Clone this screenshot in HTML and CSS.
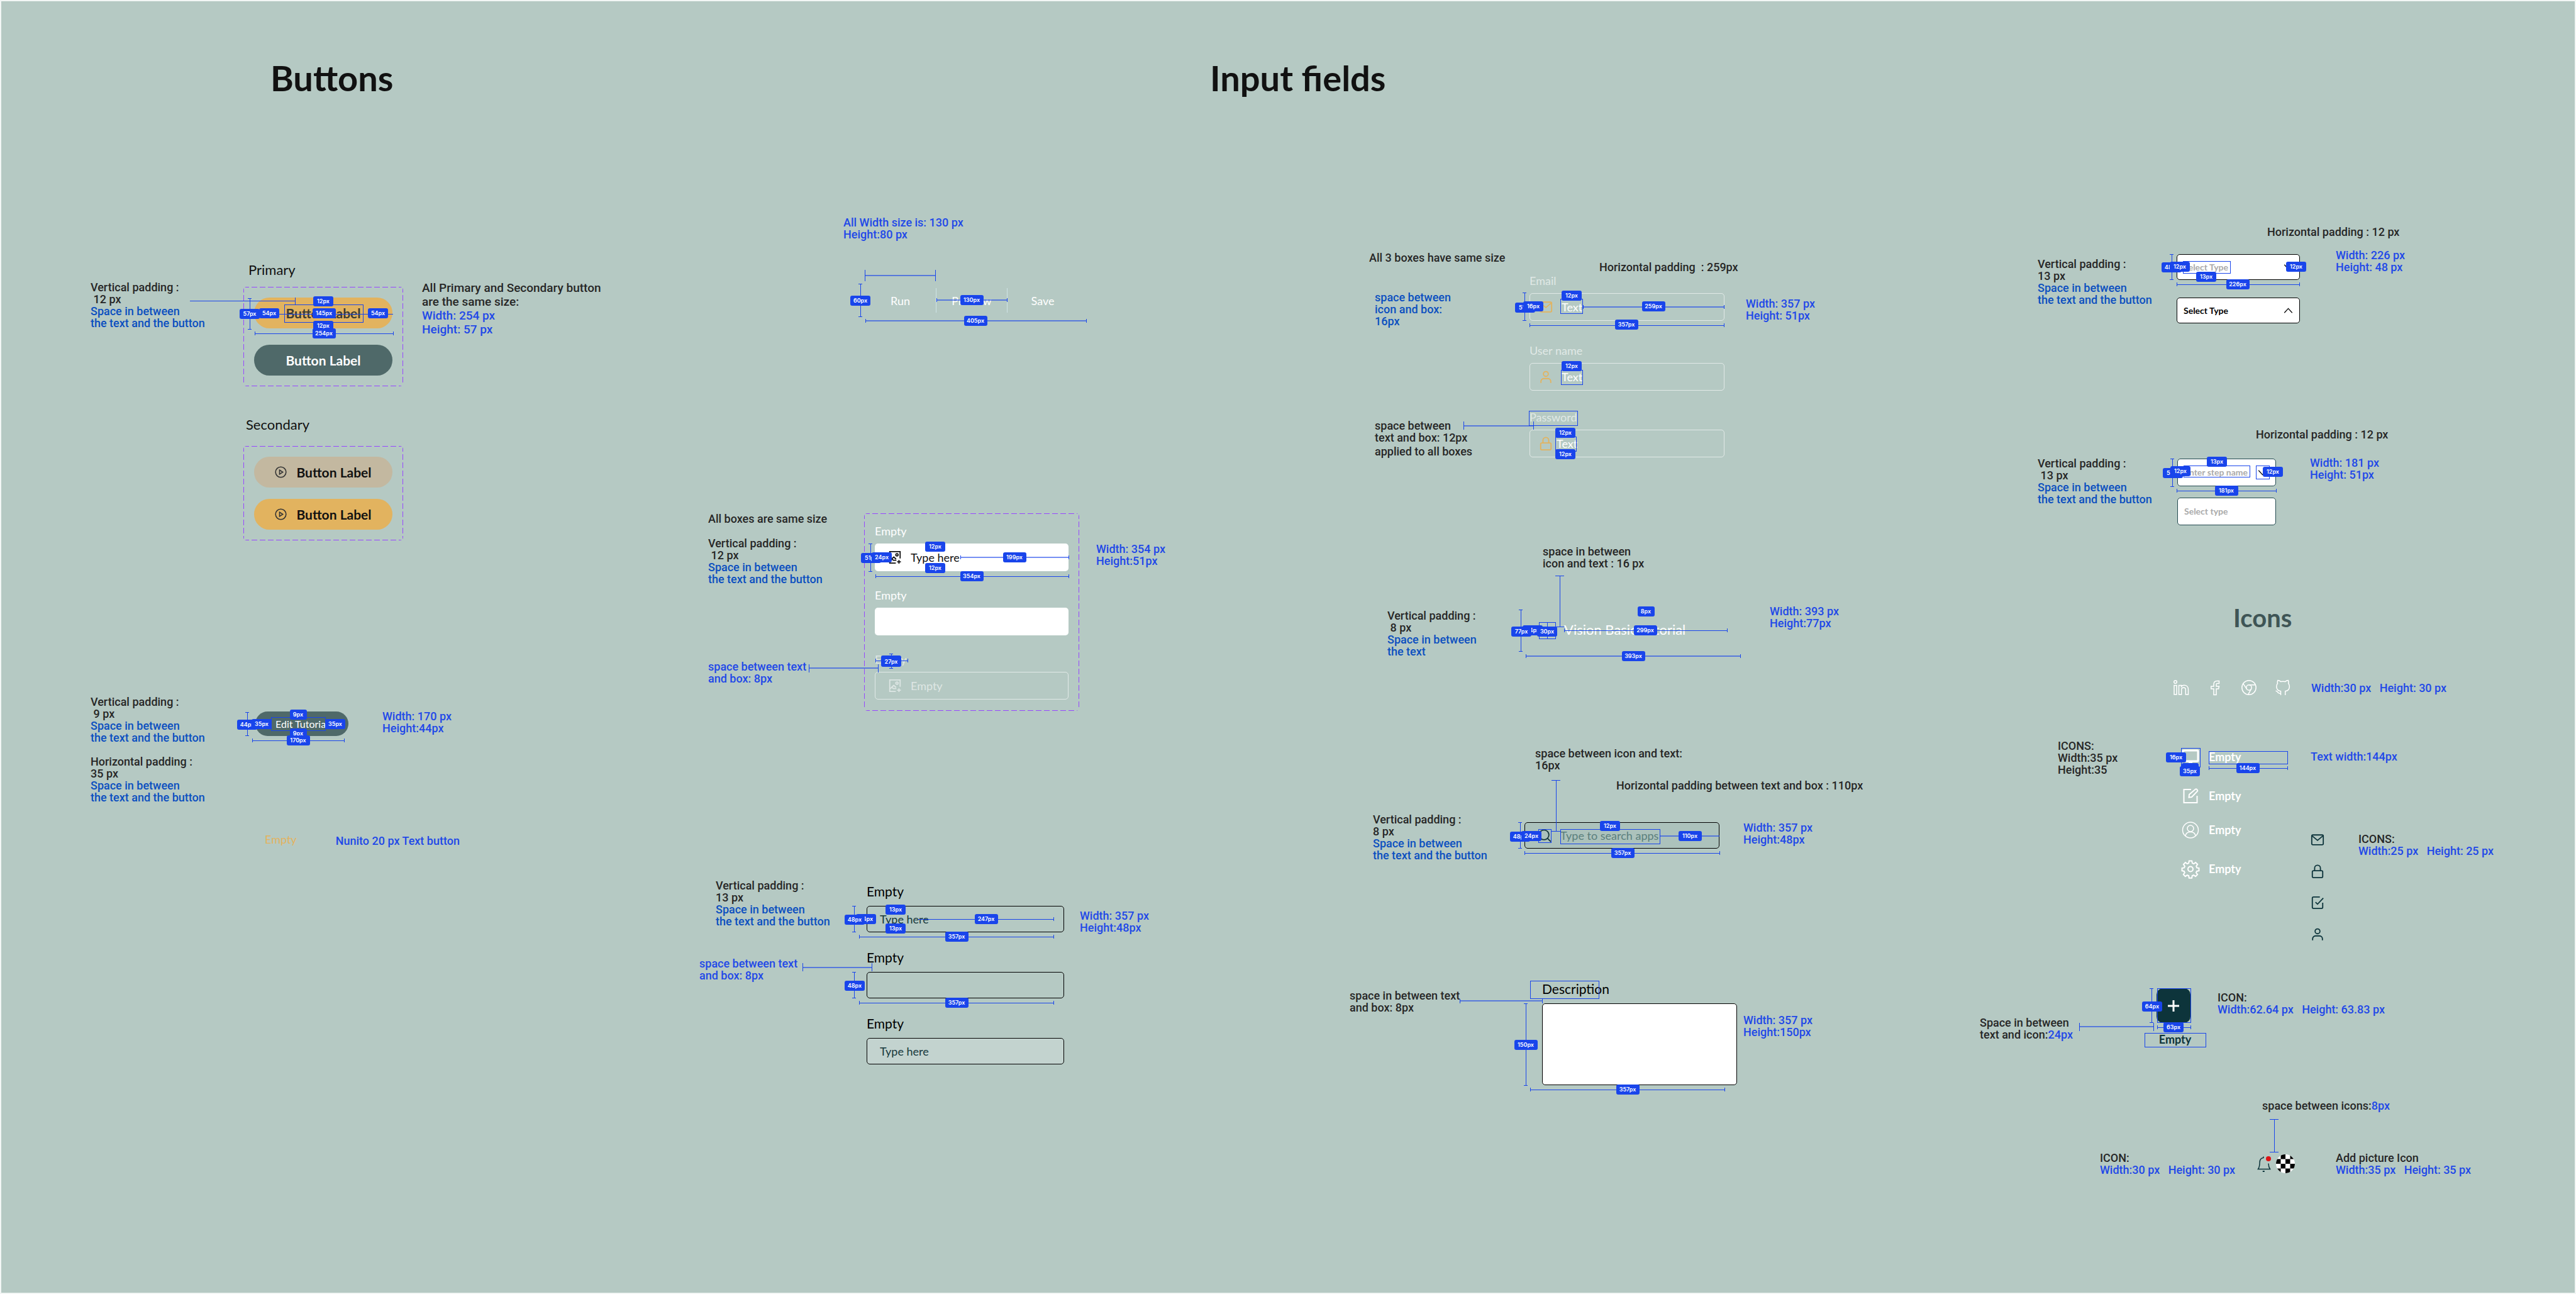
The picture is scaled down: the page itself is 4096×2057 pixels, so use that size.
FILE: index.html
```html
<!DOCTYPE html>
<html lang="en">
<head>
<meta charset="utf-8">
<title>Component specifications</title>
<link rel="stylesheet" href="styles.css">
</head>
<body>
<svg class="sprite" aria-hidden="true">
  <symbol id="play" viewBox="0 0 24 24"><circle cx="12" cy="12" r="10.5"/><path d="M9.5 7.8v8.4l6.5-4.2z"/></symbol>
  <symbol id="image-add" viewBox="0 0 24 24"><path d="M13.5 22H3V2h18v12M3 17.500l3.500-2.500 3 2h5M6 15l4-3.500 4 3.500"/><circle cx="15.500" cy="7.500" r="2"/><path d="M19 16.500v6.500M15.800 19.700h6.500"/></symbol>
  <symbol id="mail" viewBox="0 0 24 24"><rect x="2" y="3.500" width="20" height="17" rx="2"/><path d="M2.500 5l9.500 8 9.500-8"/></symbol>
  <symbol id="person" viewBox="0 0 24 24"><circle cx="12" cy="7" r="4.200"/><path d="M3.500 22.500v-2.500a5 5 0 0 1 5-5h7a5 5 0 0 1 5 5v2.500"/></symbol>
  <symbol id="lock" viewBox="0 0 24 24"><rect x="3" y="11" width="18" height="12" rx="2"/><path d="M7 11V6.500a5 5 0 0 1 10 0V11"/></symbol>
  <symbol id="check" viewBox="0 0 24 24"><path d="M21 12v8a2 2 0 0 1-2 2H5a2 2 0 0 1-2-2V4a2 2 0 0 1 2-2h11M8.500 11l3.500 3.500L22 4"/></symbol>
  <symbol id="search" viewBox="0 0 24 24"><circle cx="11" cy="11" r="8.500"/><path d="M17 17l6 6"/></symbol>
  <symbol id="down" viewBox="0 0 24 24"><path d="M2 6l10 11L22 6"/></symbol>
  <symbol id="up" viewBox="0 0 24 24"><path d="M2 18L12 7l10 11"/></symbol>
</svg>
<main class="board">
  <h2 class="title title-buttons">Buttons</h2>
  <h2 class="title title-inputs">Input fields</h2>

  <section class="column column-buttons">
    <h3 class="group primary-name">Primary</h3>
    <article class="spec buttons-spec">
      <p class="note">Vertical padding :<br>&nbsp;12 px<br><span class="deep">Space in between<br>the text and the button</span></p>
      <div class="frame frame-wide">
        <button class="btn amber ghosted">Button Label</button>
        <button class="btn slate">Button Label</button>
      </div>
      <p class="note roomy">All Primary and Secondary button<br>are the same size:<br><span class="blue">Width: 254 px<br>Height: 57 px</span></p>
      <svg class="redline" viewBox="144 448 812 168" width="812" height="168">
        <path d="M302 479H469M469 474V485M405 528v6M405 531H625M625 528v6M394 475h6M397 475V524M394 524h6M405 500H625M452 497v6M577 497v6"/>
        <rect x="452" y="485" width="125" height="28"/>
        <g class="tag d2" transform="translate(397 500)"><rect/><text>57px</text></g>
        <g class="tag d2" transform="translate(428 499)"><rect/><text>54px</text></g>
        <g class="tag d2" transform="translate(514 480)"><rect/><text>12px</text></g>
        <g class="tag d3" transform="translate(515 499)"><rect/><text>145px</text></g>
        <g class="tag d2" transform="translate(601 499)"><rect/><text>54px</text></g>
        <g class="tag d2" transform="translate(514 519)"><rect/><text>12px</text></g>
        <g class="tag d3" transform="translate(515 531)"><rect/><text>254px</text></g>
      </svg>
    </article>
    <h3 class="group secondary-name">Secondary</h3>
    <div class="frame frame-tight">
      <button class="btn sand"><svg class="icon i19"><use href="#play"/></svg>Button Label</button>
      <button class="btn amber"><svg class="icon i19"><use href="#play"/></svg>Button Label</button>
    </div>
    <article class="spec edit-spec">
      <p class="note">Vertical padding :<br>&nbsp;9 px<br><span class="deep">Space in between<br>the text and the button</span><br><br>Horizontal padding :<br>35 px<br><span class="deep">Space in between<br>the text and the button</span></p>
      <button class="btn-small">Edit Tutorial</button>
      <p class="note blue">Width: 170 px<br>Height:44px</p>
      <svg class="redline" viewBox="144 1107 700 171" width="700" height="171">
        <path d="M390 1133h6M393 1133V1170M390 1170h6M401 1175v6M401 1178H547M547 1175v6"/>
        <rect x="431" y="1141" width="86" height="21"/>
        <g class="tag d2" transform="translate(393 1153)"><rect/><text>44px</text></g>
        <g class="tag d2" transform="translate(416 1152)"><rect/><text>35px</text></g>
        <g class="tag d2" transform="translate(533 1152)"><rect/><text>35px</text></g>
        <g class="tag d1" transform="translate(474 1137)"><rect/><text>9px</text></g>
        <g class="tag d1" transform="translate(474 1167)"><rect/><text>9px</text></g>
        <g class="tag d3" transform="translate(474 1178)"><rect/><text>170px</text></g>
      </svg>
    </article>
    <div class="text-button-spec">
      <button class="btn-text">Empty</button>
      <p class="note blue">Nunito 20 px Text button</p>
    </div>
  </section>

  <section class="column column-fields">
    <article class="spec segment-spec">
      <p class="note blue">All Width size is: 130 px<br>Height:80 px</p>
      <div class="segments"><button>Run</button><button>Preview</button><button>Save</button></div>
      <svg class="redline" viewBox="1112 344 640 176" width="640" height="176">
        <path d="M1375 429V447M1487 429V447M1365 451h6M1368 451V503M1365 503h6M1489 474v6M1601 474v6M1376 507v6M1727 507v6"/>
        <path class="soft" d="M1375 438H1487M1489 477H1601M1376 510H1727"/>
        <g class="tag d2" transform="translate(1368 478)"><rect/><text>60px</text></g>
        <g class="tag d3" transform="translate(1545 477)"><rect/><text>130px</text></g>
        <g class="tag d3" transform="translate(1551 510)"><rect/><text>405px</text></g>
      </svg>
    </article>

    <article class="spec boxes-spec">
      <div class="notes">
        <p class="note">All boxes are same size</p>
        <p class="note">Vertical padding :<br>&nbsp;12 px<br><span class="deep">Space in between<br>the text and the button</span></p>
        <p class="note blue">space between text<br>and box: 8px</p>
      </div>
      <div class="frame fields-frame">
        <div class="field light"><label for="f1">Empty</label><div class="control white"><svg class="icon i22"><use href="#image-add"/></svg><input id="f1" value="Type here"></div></div>
        <div class="field light"><label for="f2">Empty</label><div class="control white"><input id="f2"></div></div>
        <div class="field light faded"><label for="f3">Empty</label><div class="control outline"><svg class="icon i22"><use href="#image-add"/></svg><input id="f3" value="Empty"></div></div>
      </div>
      <p class="note blue">Width: 354 px<br>Height:51px</p>
      <svg class="redline" viewBox="1112 815 760 316" width="760" height="316">
        <path d="M1381 864h6M1384 864V908M1381 908h6M1527 883v6M1699 883v6M1392 913v6M1392 916H1699M1699 913v6M1414 1039h6M1417 1039V1062M1414 1062h6M1392 1047v6M1392 1050H1443M1443 1047v6M1286 1056V1069M1396 1056V1069"/>
        <path class="soft" d="M1527 886H1699M1286 1062H1396"/>
        <g class="tag d2" transform="translate(1385 887)"><rect/><text>51px</text></g>
        <g class="tag d2" transform="translate(1402 886)"><rect/><text>24px</text></g>
        <g class="tag d2" transform="translate(1487 869)"><rect/><text>12px</text></g>
        <g class="tag d2" transform="translate(1487 903)"><rect/><text>12px</text></g>
        <g class="tag d3" transform="translate(1613 886)"><rect/><text>199px</text></g>
        <g class="tag d3" transform="translate(1545 916)"><rect/><text>354px</text></g>
        <g class="tag d2" transform="translate(1417 1050)"><rect/></g>
        <g class="tag d2" transform="translate(1417 1052)"><rect/><text>27px</text></g>
      </svg>
    </article>

    <article class="spec typed-spec">
      <div class="notes">
        <p class="note">Vertical padding :<br>13 px<br><span class="deep">Space in between<br>the text and the button</span></p>
        <p class="note blue">space between text<br>and box: 8px</p>
      </div>
      <div class="stack">
        <div class="field dark"><label for="g1">Empty</label><div class="control ink"><input id="g1" value="Type here"></div></div>
        <div class="field dark"><label for="g2">Empty</label><div class="control ink"><input id="g2"></div></div>
        <div class="field dark"><label for="g3">Empty</label><div class="control ink filled"><input id="g3" value="Type here"></div></div>
      </div>
      <p class="note blue">Width: 357 px<br>Height:48px</p>
      <svg class="redline" viewBox="1112 1400 760 300" width="760" height="300">
        <path d="M1355 1442h6M1358 1442V1483M1355 1483h6M1366 1488v6M1366 1491H1675M1675 1488v6M1460 1463H1675M1675 1460v6M1355 1547h6M1358 1547V1588M1355 1588h6M1366 1593v6M1366 1596H1675M1675 1593v6M1276 1533V1546M1386 1533V1546"/>
        <path class="soft" d="M1276 1540H1386"/>
        <g class="tag d2" transform="translate(1377 1463)"><rect/><text>24px</text></g>
        <g class="tag d2" transform="translate(1359 1464)"><rect/><text>48px</text></g>
        <g class="tag d2" transform="translate(1424 1448)"><rect/><text>13px</text></g>
        <g class="tag d2" transform="translate(1424 1478)"><rect/><text>13px</text></g>
        <g class="tag d3" transform="translate(1568 1463)"><rect/><text>247px</text></g>
        <g class="tag d3" transform="translate(1521 1491)"><rect/><text>357px</text></g>
        <g class="tag d2" transform="translate(1359 1569)"><rect/><text>48px</text></g>
        <g class="tag d3" transform="translate(1521 1596)"><rect/><text>357px</text></g>
      </svg>
    </article>
  </section>

  <section class="column column-forms">
    <article class="spec login-spec">
      <div class="notes">
        <p class="note">All 3 boxes have same size</p>
        <p class="note deep">space between<br>icon and box:<br>16px</p>
        <p class="note">space between<br>text and box: 12px<br><span class="lower">applied to all boxes</span></p>
      </div>
      <div class="stack">
        <p class="note">Horizontal padding&nbsp; : 259px</p>
        <div class="field pale"><label for="h1">Email</label><div class="control outline"><svg class="icon i22 gold"><use href="#mail"/></svg><input id="h1" value="Text"></div></div>
        <div class="field pale"><label for="h2">User name</label><div class="control outline"><svg class="icon i22 gold"><use href="#person"/></svg><input id="h2" value="Text"></div></div>
        <div class="field pale"><label for="h3">Password</label><div class="control outline snug"><svg class="icon i22 gold"><use href="#lock"/></svg><input id="h3" value="Text"></div></div>
      </div>
      <p class="note blue">Width: 357 px<br>Height: 51px</p>
      <svg class="redline" viewBox="2144 400 820 332" width="820" height="332">
        <path d="M2421 465h6M2424 465V509M2421 509h6M2517 485v6M2741 485v6M2432 514v6M2432 517H2741M2741 514v6M2327 670V683M2438 670V683"/>
        <path class="soft" d="M2517 488H2741M2327 677H2438"/>
        <rect x="2481" y="475" width="35" height="23"/>
        <rect x="2482" y="588" width="34" height="23"/>
        <rect x="2431" y="653" width="77" height="23"/>
        <rect x="2473" y="694" width="33" height="23"/>
        <g class="tag d2" transform="translate(2425 489)"><rect/><text>51px</text></g>
        <g class="tag d2" transform="translate(2438 487)"><rect/><text>16px</text></g>
        <g class="tag d2" transform="translate(2499 470)"><rect/><text>12px</text></g>
        <g class="tag d3" transform="translate(2629 487)"><rect/><text>259px</text></g>
        <g class="tag d3" transform="translate(2586 516)"><rect/><text>357px</text></g>
        <g class="tag d2" transform="translate(2499 582)"><rect/><text>12px</text></g>
        <g class="tag d2" transform="translate(2489 688)"><rect/><text>12px</text></g>
        <g class="tag d2" transform="translate(2489 722)"><rect/><text>12px</text></g>
      </svg>
    </article>

    <article class="spec vision-spec">
      <p class="note vision-top">space in between<br>icon and text : 16 px</p>
      <p class="note vision-left">Vertical padding :<br>&nbsp;8 px<br><span class="deep">Space in between<br>the text</span></p>
      <p class="vision">Vision Basic Tutorial</p>
      <p class="note blue">Width: 393 px<br>Height:77px</p>
      <svg class="redline" viewBox="2144 868 900 190" width="900" height="190">
        <path d="M2473 916h14M2480 916V997M2473 997h14M2415 970h6M2418 970V1036M2415 1036h6M2426 1041v6M2767 1041v6M2487 1000v6M2487 1003H2746M2746 1000v6M2460 990V1016"/>
        <path class="soft" d="M2426 1044H2767"/>
        <rect x="2447" y="990" width="26" height="26"/>
        <g class="tag d2" transform="translate(2437 1003)"><rect/><text>24px</text></g>
        <g class="tag d2" transform="translate(2419 1005)"><rect/><text>77px</text></g>
        <g class="tag d2" transform="translate(2460 1005)"><rect/><text>30px</text></g>
        <g class="tag d1" transform="translate(2617 973)"><rect/><text>8px</text></g>
        <g class="tag d3" transform="translate(2616 1003)"><rect/><text>299px</text></g>
        <g class="tag d3" transform="translate(2597 1044)"><rect/><text>393px</text></g>
      </svg>
    </article>

    <article class="spec search-spec">
      <p class="note search-top">space between icon and text:<br>16px</p>
      <p class="note search-side">Horizontal padding between text and box : 110px</p>
      <p class="note search-left">Vertical padding :<br>8 px<br><span class="deep">Space in between<br>the text and the button</span></p>
      <div class="control ink search"><svg class="icon i22"><use href="#search"/></svg><input type="search" aria-label="Search apps" placeholder="Type to search apps"></div>
      <p class="note blue">Width: 357 px<br>Height:48px</p>
      <svg class="redline" viewBox="2144 1189 830 182" width="830" height="182">
        <path d="M2467 1241h14M2474 1241V1322M2467 1322h14M2414 1308h6M2417 1308V1349M2414 1349h6M2424 1354v6M2424 1357H2734M2734 1354v6"/>
        <path class="soft" d="M2639 1330H2734"/>
        <rect x="2446" y="1319" width="20" height="21"/>
        <rect x="2481" y="1319" width="158" height="23"/>
        <g class="tag d2" transform="translate(2417 1331)"><rect/><text>48px</text></g>
        <g class="tag d2" transform="translate(2435 1330)"><rect/><text>24px</text></g>
        <g class="tag d2" transform="translate(2560 1314)"><rect/><text>12px</text></g>
        <g class="tag d3" transform="translate(2687 1330)"><rect/><text>110px</text></g>
        <g class="tag d3" transform="translate(2580 1357)"><rect/><text>357px</text></g>
      </svg>
    </article>

    <article class="spec area-spec">
      <p class="note">space in between text<br>and box: 8px</p>
      <div class="field dark"><label for="desc">Description</label><textarea id="desc"></textarea></div>
      <p class="note blue">Width: 357 px<br>Height:150px</p>
      <svg class="redline" viewBox="2144 1561 720 182" width="720" height="182">
        <path d="M2321 1590V1597M2452 1590V1597M2423 1597h6M2426 1597V1727M2423 1727h6M2433 1731v6M2433 1734H2742M2742 1731v6"/>
        <path class="soft" d="M2321 1593H2452"/>
        <rect x="2433" y="1561" width="109" height="28"/>
        <g class="tag d3" transform="translate(2426 1663)"><rect/><text>150px</text></g>
        <g class="tag d3" transform="translate(2588 1734)"><rect/><text>357px</text></g>
      </svg>
    </article>
  </section>

  <section class="column column-icons">
    <p class="note select-top">Horizontal padding : 12 px</p>
    <article class="spec select-spec">
      <p class="note">Vertical padding :<br>13 px<br><span class="deep">Space in between<br>the text and the button</span></p>
      <div class="stack">
        <div class="picker muted"><select aria-label="Type"><option>Select Type</option></select><svg class="icon thin"><use href="#down"/></svg></div>
        <div class="picker"><select aria-label="Type, open"><option>Select Type</option></select><svg class="icon thin"><use href="#up"/></svg></div>
      </div>
      <p class="note blue">Width: 226 px<br>Height: 48 px</p>
      <svg class="redline" viewBox="3148 396 700 120" width="700" height="120">
        <path d="M3450 404h6M3453 404V444M3450 444h6M3461 449v6M3461 452H3656M3656 449v6"/>
        <rect x="3471" y="415" width="75" height="19"/>
        <g class="tag d2" transform="translate(3453 425)"><rect/><text>48px</text></g>
        <g class="tag d2" transform="translate(3466 424)"><rect/><text>12px</text></g>
        <g class="tag d2" transform="translate(3508 440)"><rect/><text>13px</text></g>
        <g class="tag d3" transform="translate(3558 452)"><rect/><text>226px</text></g>
        <g class="tag d2" transform="translate(3651 424)"><rect/><text>12px</text></g>
      </svg>
    </article>
    <p class="note step-top">Horizontal padding : 12 px</p>
    <article class="spec step-spec">
      <p class="note">Vertical padding :<br>&nbsp;13 px<br><span class="deep">Space in between<br>the text and the button</span></p>
      <div class="stack">
        <div class="picker teal"><input aria-label="Step name" placeholder="Enter step name"><svg class="icon thin"><use href="#down"/></svg></div>
        <div class="picker teal"><input aria-label="Step type" placeholder="Select type"></div>
      </div>
      <p class="note blue">Width: 181 px<br>Height: 51px</p>
      <svg class="redline" viewBox="3148 727 700 108" width="700" height="108">
        <path d="M3451 730h6M3454 730V774M3451 774h6M3461 778v6M3461 781H3619M3619 778v6"/>
        <rect x="3472" y="741" width="105" height="18"/>
        <rect x="3587" y="741" width="21" height="21"/>
        <g class="tag d2" transform="translate(3455 753)"><rect/><text>51px</text></g>
        <g class="tag d2" transform="translate(3467 750)"><rect/><text>12px</text></g>
        <g class="tag d2" transform="translate(3525 735)"><rect/><text>13px</text></g>
        <g class="tag d2" transform="translate(3614 751)"><rect/><text>12px</text></g>
        <g class="tag d3" transform="translate(3540 781)"><rect/><text>181px</text></g>
      </svg>
    </article>

    <h2 class="icons-title">Icons</h2>
    <div class="social-spec">
      <svg class="icon i26" viewBox="0 0 26 26"><circle cx="4" cy="4" r="2.300"/><path d="M2 9.500h4v14.500H2zM9.500 9.500h4v1.800c1-1.300 2.500-2.100 4.300-2.100 4 0 6.700 2.600 6.700 6.600V24h-4.200v-7.500c0-2-1.300-3.400-3.200-3.400s-3.400 1.400-3.400 3.400V24H9.500z"/></svg>
      <svg class="icon i26" viewBox="0 0 26 26"><path d="M19.500 2.500h-3.200c-3.200 0-5.300 2-5.300 5.300V11H6.800v4H11v9.500h4V15h3.600l.9-4H15V8.200c0-1 .6-1.600 1.600-1.600h2.900z"/></svg>
      <svg class="icon i26" viewBox="0 0 26 26"><circle cx="13" cy="13" r="11.200"/><circle cx="13" cy="13" r="4.200"/><path d="M13 8.800h10.300M9.400 15.100L3.800 6.900M16.600 15.100l-5 9"/></svg>
      <svg class="icon i26" viewBox="0 0 26 26"><path d="M9.500 25v-6.200c-5-.8-6.700-3.800-6.700-7.600 0-1.900.6-3.400 1.700-4.600-.5-1.600-.4-3.300.3-5 1.800.1 3.400.8 4.900 2a16 16 0 0 1 6.800 0c1.500-1.200 3.100-1.900 4.900-2 .7 1.700.8 3.400.3 5 1.100 1.200 1.700 2.700 1.700 4.600 0 3.800-1.700 6.800-6.700 7.600V25M9.500 22c-3.500.8-4.500-.8-5.200-2.200C3.800 18.900 3 18.500 1.500 18.300"/></svg>
      <p class="note blue">Width:30 px&nbsp;&nbsp; Height: 30 px</p>
    </div>
    <article class="spec menu-spec">
      <p class="note">ICONS:<br>Width:35 px<br>Height:35</p>
      <ul class="menu">
        <li><svg class="icon i30" viewBox="0 0 30 30"><rect class="bold" x="3" y="5" width="24" height="17" rx="1"/><path class="solid" d="M12 22h6v3h3v2H9v-2h3z"/></svg>Empty</li>
        <li><svg class="icon i30" viewBox="0 0 30 30"><path class="mid" d="M16 5H4.500v21h21V15M12.500 17.500l.5-4.500 10-8.500c1.500-1 4 1.500 3 3.200L17 17z"/></svg>Empty</li>
        <li><svg class="icon i30" viewBox="0 0 30 30"><circle cx="15" cy="15.500" r="12.500"/><circle cx="15" cy="13" r="5"/><path d="M7 25c.5-4 3.500-6.500 8-6.500s7.500 2.500 8 6.500"/></svg>Empty</li>
        <li><svg class="icon i30" viewBox="0 0 30 30"><circle class="mid" cx="15" cy="15.500" r="4"/><path class="mid" d="M12.800 2.500h4.400l.7 3.600 2.300 1 3-2.100 3 3-2 3 .9 2.400 3.400.6v4.200l-3.500.7-1 2.300 2.100 3-3 3-3-2-2.300.9-.7 3.600h-4.300l-.7-3.600-2.300-.9-3 2-3-3 2-3-.9-2.300-3.400-.7V14l3.500-.6 1-2.400-2.100-3 3-3 3 2.100 2.300-1z"/></svg>Empty</li>
      </ul>
      <div class="menu-side">
        <p class="note blue">Text width:144px</p>
        <div class="small-icons">
          <div class="small-list">
            <svg class="icon i22"><use href="#mail"/></svg>
            <svg class="icon i22"><use href="#lock"/></svg>
            <svg class="icon i22"><use href="#check"/></svg>
            <svg class="icon i22"><use href="#person"/></svg>
          </div>
          <p class="note">ICONS:<br><span class="blue">Width:25 px&nbsp;&nbsp; Height: 25 px</span></p>
        </div>
      </div>
      <svg class="redline" viewBox="3148 1178 600 80" width="600" height="80">
        <path d="M3512 1220v6M3512 1223H3637M3637 1220v6"/>
        <rect x="3468" y="1191" width="30" height="30"/>
        <rect x="3512" y="1196" width="125" height="20"/>
        <g class="tag d2" transform="translate(3460 1206)"><rect/><text>16px</text></g>
        <g class="tag d1" transform="translate(3482 1223)"><rect/></g>
        <g class="tag d2" transform="translate(3482 1228)"><rect/><text>35px</text></g>
        <g class="tag d3" transform="translate(3574 1223)"><rect/><text>144px</text></g>
      </svg>
    </article>

    <article class="spec plus-spec">
      <p class="note">Space in between<br>text and icon:<span class="blue">24px</span></p>
      <div class="plus">
        <button aria-label="Add"><svg class="icon i22" viewBox="0 0 22 22"><path class="bold" d="M11 2v18M2 11h18"/></svg></button>
        <p>Empty</p>
      </div>
      <p class="note">ICON:<br><span class="blue">Width:62.64 px&nbsp;&nbsp; Height: 63.83 px</span></p>
      <svg class="redline" viewBox="3148 1573 800 94" width="800" height="94">
        <path d="M3418 1573h6M3421 1573V1627M3418 1627h6M3430 1632v6M3430 1635H3483M3483 1632v6M3306 1628V1641M3424 1628V1641"/>
        <path class="soft" d="M3306 1634H3424"/>
        <rect x="3430" y="1573" width="53" height="54"/>
        <rect x="3410" y="1644" width="97" height="22"/>
        <g class="tag d2" transform="translate(3422 1602)"><rect/><text>64px</text></g>
        <g class="tag d2" transform="translate(3456 1635)"><rect/><text>63px</text></g>
      </svg>
    </article>

    <article class="spec bell-spec">
      <p class="note bell-top">space between icons:<span class="blue">8px</span></p>
      <p class="note bell-left">ICON:<br><span class="blue">Width:30 px&nbsp;&nbsp; Height: 30 px</span></p>
      <div class="bell">
        <svg class="icon i26" viewBox="0 0 26 26"><path d="M13 3.500c-4 .3-6 3.500-6 8 0 4.500 0 6.500-2.500 10h19c-2-3-2.500-5-2.500-9M13 4V1.500"/><path class="mid" d="M11.800 25h3"/><circle class="alert" cx="21" cy="5" r="4"/></svg>
        <svg class="avatar" viewBox="0 0 32 32"><clipPath id="round"><circle cx="16" cy="16" r="16"/></clipPath><g clip-path="url(#round)"><rect width="32" height="32" fill="#fff"/><path d="M8 0h8v8H8zM24 0h8v8h-8zM0 8h8v8H0zM16 8h8v8h-8zM8 16h8v8H8zM24 16h8v8h-8zM0 24h8v8H0zM16 24h8v8h-8z"/></g></svg>
      </div>
      <p class="note">Add picture Icon<br><span class="blue">Width:35 px&nbsp;&nbsp; Height: 35 px</span></p>
      <svg class="redline" viewBox="3148 1750 820 120" width="820" height="120">
        <path d="M3609 1781h14M3616 1781V1833M3609 1833h14"/>
      </svg>
    </article>
  </section>
</main>
</body>
</html>
```
FILE: styles.css
```css
:root {
  --page: #b5c9c3;
  --text: #262626;
  --blue: #1f48e8;
  --deep: #0b4fc0;
  --tag: #1945eb;
  --amber: #e2b35f;
  --slate: #4f6969;
  --teal: #0d343b;
  --pale: rgba(255, 255, 255, .6);
}

* { box-sizing: border-box; }

body {
  margin: 0;
  background: var(--page);
  color: var(--text);
  font-family: Lato, "Noto Sans", sans-serif;
  font-size: 18px;
  line-height: 24px;
}

p, h2, h3, ul { margin: 0; padding: 0; font-weight: 400; }

button, input, select, textarea {
  margin: 0;
  padding: 0;
  border: 0;
  background: none;
  color: inherit;
  font: inherit;
  appearance: none;
}

input { display: block; flex: 1; min-width: 0; height: 24px; }

.sprite { position: absolute; width: 0; height: 0; }

.board {
  display: grid;
  grid-template-columns: 968fr 1032fr 1004fr 946fr;
  grid-template-rows: auto 1fr;
  min-height: 100vh;
  padding: 86px 0 0 142px;
  border: 2px solid #f2f6f5;
}

.title { color: #111; font-size: 56px; font-weight: 700; line-height: 72px; }
.title-buttons { grid-column: 1; padding-left: 286px; }
.title-inputs { grid-column: 2 / 5; padding-left: 812px; }

.column { grid-row: 2; min-width: 0; }

/* Shared text */
.note {
  font-family: Roboto, "Liberation Sans", sans-serif;
  font-size: 18px;
  font-weight: 500;
  line-height: 19px;
  white-space: nowrap;
}
.roomy { font-size: 19px; line-height: 22px; }
.blue { color: var(--blue); }
.deep { color: var(--deep); }
.group { color: #111; font-size: 22px; line-height: 26px; }

.spec { position: relative; display: grid; align-items: start; justify-content: start; }

/* Measurement overlay */
.redline {
  position: absolute;
  top: 0;
  left: 0;
  overflow: visible;
  fill: none;
  stroke: var(--tag);
  shape-rendering: crispEdges;
  pointer-events: none;
}
.redline .soft { stroke-width: 2; opacity: .6; }
.tag rect { y: -8px; height: 16px; rx: 3px; fill: var(--tag); stroke: none; shape-rendering: auto; }
.tag text {
  fill: #fff;
  stroke: none;
  font-family: Inter, sans-serif;
  font-size: 9px;
  font-weight: 600;
  text-anchor: middle;
  transform: translateY(3px);
}
.d1 rect { x: -13px; width: 27px; }
.d2 rect { x: -16px; width: 32px; }
.d3 rect { x: -18px; width: 37px; }

/* Icons */
.icon { display: block; flex: none; fill: none; stroke: currentColor; stroke-width: 2; overflow: visible; }
.thin { width: 15px; height: 15px; }
.i19 { width: 19px; height: 19px; }
.i22 { width: 22px; height: 22px; }
.i26 { width: 26px; height: 26px; stroke-width: 1.5; }
.i30 { width: 30px; height: 30px; stroke-width: 1.5; }
.icon .bold { stroke-width: 3; }
.icon .mid { stroke-width: 2; }
.icon .solid { fill: currentColor; stroke: none; }
.icon .alert { fill: #dd1416; stroke: none; }
.gold { color: var(--amber); }

/* Buttons */
.column-buttons { padding-top: 256px; }
.primary-name { padding-left: 251px; }
.secondary-name { margin-top: 48px; padding-left: 247px; }
.buttons-spec { grid-template-columns: 243px 254px auto; margin-top: 5px; }
.buttons-spec .frame { margin-top: 9px; }
.buttons-spec .roomy { padding-left: 30px; }

/* Dashed outline: 9px dashes, 4px gaps */
.frame {
  --across: repeating-linear-gradient(90deg, #9747ff 0 9px, transparent 9px 13px);
  --down: repeating-linear-gradient(180deg, #9747ff 0 9px, transparent 9px 13px);
  display: flex;
  flex-direction: column;
  padding: 17px;
  border-radius: 5px;
  background:
    var(--across) top / 100% 1px no-repeat,
    var(--across) bottom / 100% 1px no-repeat,
    var(--down) left / 1px 100% no-repeat,
    var(--down) right / 1px 100% no-repeat;
}
.frame-wide { gap: 26px; }
.frame-tight { gap: 18px; width: 254px; margin: 21px 0 0 243px; }
.btn {
  display: flex;
  align-items: center;
  justify-content: center;
  gap: 15px;
  height: 49px;
  border-radius: 25px;
  color: #111;
  font-size: 21px;
  font-weight: 700;
}
.btn .icon { color: #333; }
.amber { background: var(--amber); }
.ghosted { color: #3a3a34; }
.slate { background: var(--slate); color: #fff; }
.sand { background: #c3b8a0; }
.edit-spec { grid-template-columns: 262px 148px auto; margin-top: 247px; }
.edit-spec .blue { padding: 23px 0 0 54px; }
.btn-small { height: 39px; margin-top: 25px; border-radius: 20px; background: var(--slate); color: #fff; font-size: 16px; }
.text-button-spec { display: flex; align-items: end; gap: 62px; margin-top: 45px; padding-left: 277px; }
.btn-text { color: var(--amber); }

/* Fields */
.stack, .field { display: flex; flex-direction: column; }
.field { gap: 8px; }
.control {
  display: flex;
  align-items: center;
  height: 44px;
  padding: 0 20px;
  border: 1px solid transparent;
  border-radius: 5px;
}
.white { background: #fff; color: #111; }
.outline { border-color: var(--pale); }
.ink { border-color: #000; }
.light label { color: #fff; }

.column-fields { padding-top: 184px; }
.segment-spec .note { padding-left: 229px; }
.segments { display: flex; margin: 76px 0 0 263px; color: #fff; }
.segments button { width: 113px; height: 39px; }
.segments button + button { border-left: 1px solid #cfe4e6; }

.boxes-spec { grid-template-columns: 262px 342px auto; margin-top: 318px; }
.boxes-spec .notes { padding-left: 14px; }
.boxes-spec .notes .note + .note { margin-top: 20px; }
.boxes-spec .notes .blue.note { margin-top: 120px; }
.boxes-spec > .blue { padding: 48px 0 0 27px; }
.fields-frame { gap: 26px; margin-top: 1px; padding: 16px 17px 18px; }
.fields-frame .icon { margin-right: 14px; }
.faded label, .faded .icon, .faded input { color: #fff; opacity: .55; }

.typed-spec { grid-template-columns: 266px 314px auto; margin-top: 268px; }
.typed-spec .notes .note { padding-left: 26px; }
.typed-spec .notes .blue { margin-top: 48px; padding-left: 0; }
.typed-spec .stack { gap: 27px; margin-top: 6px; }
.typed-spec > .blue { padding: 48px 0 0 25px; }
.dark { gap: 10px; }
.dark label { color: #000; font-size: 21px; line-height: 26px; }
.dark .control { height: 42px; color: #16383c; }
.filled { background: rgba(255, 255, 255, .2); }

.column-forms { padding-top: 240px; }
.login-spec { grid-template-columns: 288px 310px auto; }
.login-spec .notes .note { padding-left: 42px; }
.login-spec .notes .note:first-child { padding-left: 33px; }
.login-spec .notes .note:nth-child(2) { margin-top: 44px; }
.login-spec .notes .note:nth-child(3) { margin-top: 147px; }
.lower { line-height: 25px; }
.login-spec .stack .note { margin-top: 15px; padding-left: 111px; }
.login-spec > .blue { padding: 73px 0 0 34px; }
.pale label { color: var(--pale); }
.pale .control { gap: 14px; padding: 0 14px; color: #fff; }
.pale .snug { gap: 6px; }
.pale + .pale { margin-top: 35px; }
.pale + .pale + .pale { margin-top: 30px; }

.vision-spec { grid-template-columns: 343px 327px auto; margin-top: 137px; }
.vision-top { grid-column: 1 / -1; padding: 0 0 57px 309px; }
.vision-left { padding: 7px 0 0 62px; }
.vision { padding-top: 25px; color: #fff; font-size: 22px; line-height: 28px; }

.search-spec { grid-template-columns: 280px 310px auto; margin-top: 143px; }
.search-top { grid-column: 1 / -1; padding-left: 297px; }
.search-side { grid-column: 1 / -1; padding: 13px 0 35px 426px; }
.search-left { padding-left: 39px; }
.search { gap: 14px; height: 42px; margin-top: 14px; background: rgba(80, 120, 110, .08); color: #16383c; }
.search input::placeholder { color: #5b7f7c; opacity: 1; }
.search-spec > .blue { padding: 13px 0 0 38px; }

.area-spec { grid-template-columns: 308px 310px auto; margin-top: 190px; }
.area-spec > .note { padding: 14px 0 0 2px; }
.area-spec > .blue { padding: 53px 0 0 10px; }
textarea { height: 130px; border: 1px solid #000; border-radius: 5px; background: #fff; resize: none; }

/* Selects and icons */
.column-icons { padding-top: 199px; }
.select-top { padding-left: 457px; }
.select-spec { grid-template-columns: 313px 196px auto; margin-top: 18px; }
.select-spec > .note { padding: 14px 0 0 92px; }
.select-spec > .blue { padding: 0 0 0 57px; }
.select-spec .stack { gap: 28px; margin-top: 8px; }
.picker {
  display: flex;
  align-items: center;
  height: 41px;
  padding: 0 10px;
  border: 1px solid #000;
  border-radius: 5px;
  background: #fff;
  color: #000;
  font-size: 14px;
  font-weight: 700;
}
.picker select { flex: 1; }
.picker input::placeholder { color: #aaa; opacity: 1; }
.muted select { color: #aaa; }
.picker .icon { color: #000; }
.teal { height: 44px; border-color: #234a50; }
.teal .icon { margin-right: 3px; }
.step-top { margin-top: 167px; padding-left: 439px; }
.step-spec { grid-template-columns: 314px 157px auto; margin-top: 26px; }
.step-spec > .note { padding: 1px 0 0 92px; }
.step-spec > .blue { padding: 0 0 0 54px; }
.step-spec .stack { gap: 18px; margin-top: 3px; }

.icons-title { margin-top: 123px; padding-left: 403px; color: #3f5556; font-size: 40px; font-weight: 700; line-height: 48px; }
.social-spec { display: flex; align-items: center; gap: 28px; margin-top: 74px; padding-left: 307px; color: #fff; }
.social-spec .note { padding-left: 4px; }

.menu-spec { grid-template-columns: 320px 206px auto; margin-top: 70px; }
.menu-spec > .note { padding-left: 124px; }
.menu { display: grid; gap: 32px; margin-top: 12px; color: #fff; font-weight: 700; list-style: none; }
.menu li { display: flex; align-items: center; gap: 14px; height: 30px; }
.menu li:nth-child(3) { margin-top: -8px; }
.menu-side > .note { padding-top: 17px; }
.small-icons { display: flex; gap: 54px; margin-top: 112px; }
.small-list { display: grid; gap: 28px; color: var(--teal); }

.plus-spec { grid-template-columns: 262px 97px auto; margin-top: 75px; }
.plus-spec > .note:first-child { padding-top: 45px; }
.plus button { display: grid; place-items: center; width: 54px; height: 55px; margin-left: 19px; border-radius: 10px; background: var(--teal); color: #fff; }
.plus p { margin-top: 14px; color: var(--teal); font-weight: 700; text-align: center; }
.plus-spec > .note:last-of-type { padding: 5px 0 0 19px; }

.bell-spec { grid-template-columns: 438px 128px auto; margin-top: 84px; }
.bell-top { grid-column: 1 / -1; padding: 0 0 64px 449px; }
.bell-left { padding-left: 191px; }
.bell { display: flex; align-items: center; gap: 7px; margin-top: 4px; color: var(--teal); }
.avatar { width: 30px; height: 30px; }
```
